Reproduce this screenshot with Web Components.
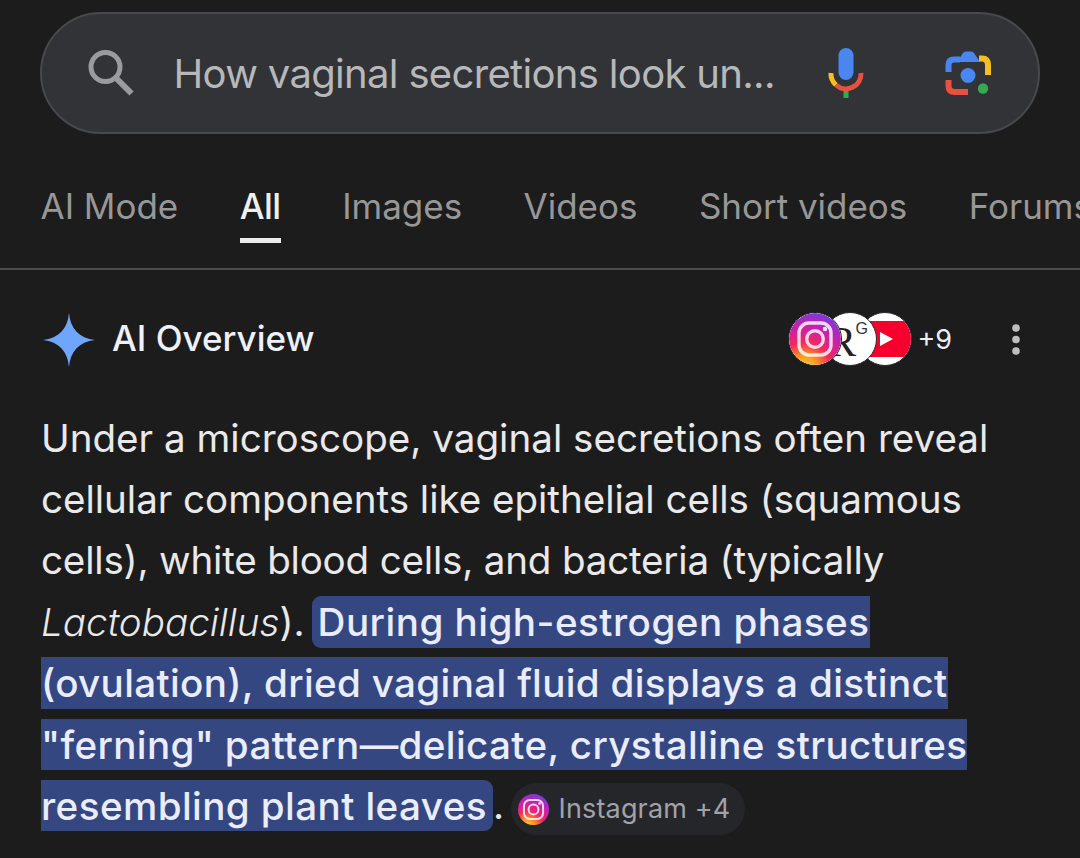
<!doctype html><html><head><style>
html,body{margin:0;background:#1c1c1d;overflow:hidden}
body{font-family:Inter,"Noto Sans",sans-serif;width:1080px;height:858px}
</style></head><body>
<search-app></search-app>
<template id="ig"><svg viewBox="0 0 52 52" width="100%" height="100%" style="display:block"><defs><radialGradient id="g1" cx="30%" cy="108%" r="115%"><stop offset="0" stop-color="#ffdd35"/><stop offset=".22" stop-color="#ff9a1f"/><stop offset=".45" stop-color="#f5265f"/><stop offset=".72" stop-color="#c81fb0"/><stop offset="1" stop-color="#6f3ee0"/></radialGradient></defs><circle cx="26" cy="26" r="26" fill="url(#g1)"/><rect x="10" y="10" width="32" height="32" rx="10" fill="none" stroke="#fff" stroke-opacity=".82" stroke-width="3.4"/><circle cx="26" cy="26" r="8.300" fill="none" stroke="#fff" stroke-opacity=".82" stroke-width="3.4"/><circle cx="36" cy="16" r="2.200" fill="#fff" fill-opacity=".9"/></svg></template>
<script>
const igMarkup=()=>document.getElementById('ig').innerHTML;
class SearchBar extends HTMLElement{connectedCallback(){this.attachShadow({mode:'open'}).innerHTML=`<style>
:host{display:flex;align-items:center;box-sizing:border-box;height:122px;margin:12px 40px 0 40px;border:2.5px solid #48494c;border-radius:61px;background:#323337;padding:0 43px 0 43px}
.q{flex:1;margin:0 0 0 36.500px;font-size:40px;letter-spacing:-.67px;color:#b7b8ba;white-space:nowrap}
svg{display:block;flex:none}
.mic{margin:6px 79px 0 0}
.lens{margin-top:3px}
</style>
<svg width="52" height="52" viewBox="0 0 52 52"><circle cx="20.500" cy="20" r="14.500" fill="none" stroke="#9a9b9d" stroke-width="5"/><path d="M31 31 L46.500 46.500" stroke="#9a9b9d" stroke-width="6" fill="none"/></svg>
<span class="q"><slot></slot></span>
<svg class="mic" width="40" height="56" viewBox="0 0 40 56"><rect x="12.500" y="0" width="15" height="32" rx="7.500" fill="#4a86f0"/><path d="M5 25 A 15 15 0 0 0 10 37" fill="none" stroke="#f6bf26" stroke-width="5"/><path d="M10 37 A 15 15 0 0 0 35 25" fill="none" stroke="#e8503f" stroke-width="5"/><rect x="17.500" y="43" width="5" height="7" fill="#34a853"/></svg>
<svg class="lens" width="50" height="50" viewBox="945 50 50 50"><path d="M948.500 72 V65 Q948.500 59.500 954 59.500 H960" fill="none" stroke="#4a86f0" stroke-width="6"/><path d="M957 62 L963 53 Q964 51.500 966 51.500 H971 Q973 51.500 974 53 L980 62 Z" fill="#4a86f0"/><path d="M979 58.500 H982 Q988 58.500 988 65 V75" fill="none" stroke="#f6bf26" stroke-width="6"/><path d="M948.500 80 V86 Q948.500 92 955 92 H968" fill="none" stroke="#e8503f" stroke-width="6"/><circle cx="968" cy="75.500" r="7.500" fill="#4a86f0"/><circle cx="983" cy="88.500" r="5.200" fill="#34a853"/></svg>`}}
customElements.define('search-bar',SearchBar);

class TabItem extends HTMLElement{connectedCallback(){const a=this.hasAttribute('active');this.attachShadow({mode:'open'}).innerHTML=`<style>
:host{display:flex;flex:none;flex-direction:column;align-items:stretch;font-size:35px;color:${a?'#f0f0f0':'#979797'};font-weight:${a?500:400};letter-spacing:${a?'-.5px':'-.02px'}}
.l{line-height:44px}
.u{height:5px;margin-top:10px;background:${a?'#ececec':'transparent'}}
</style><span class="l"><slot></slot></span><span class="u"></span>`}}
customElements.define('tab-item',TabItem);

class TabBar extends HTMLElement{connectedCallback(){this.attachShadow({mode:'open'}).innerHTML=`<style>
:host{display:flex;gap:61.500px;box-sizing:border-box;height:136px;padding:50px 0 0 40.500px;border-bottom:2px solid #4b4c4f;overflow:hidden;white-space:nowrap}
</style><slot></slot>`}}
customElements.define('tab-bar',TabBar);

class SourceIcons extends HTMLElement{connectedCallback(){this.attachShadow({mode:'open'}).innerHTML=`<style>
:host{display:flex;align-items:center}
.c{box-sizing:content-box;width:52px;height:52px;border-radius:50%;border:1px solid #2b2630;overflow:hidden;position:relative;flex:none;background:#fff;margin-left:-19px}
.c.a{margin-left:0;z-index:3;border-color:#1c1c1d}
.c.r{z-index:2;font-family:"Liberation Serif",serif;color:#222}
.r i{font-style:normal;position:absolute;left:3px;top:6px;font-size:43px;line-height:45px}
.r b{font-family:"Liberation Sans",sans-serif;font-weight:400;position:absolute;left:31px;top:8px;font-size:16px;line-height:16px;color:#333}
.c.y{z-index:1}
.y svg{display:block}
.n{margin-left:5px;font-size:27px;color:#eceef2}
</style><span class="c a">${igMarkup()}</span><span class="c r"><i>R</i><b>G</b></span><span class="c y"><svg viewBox="0 0 52 52" width="52" height="52"><rect x="0" y="8" width="56" height="36" rx="7" fill="#f6002e"/><path d="M21 19 L34 26 L21 33 Z" fill="#fff"/></svg></span><span class="n"><slot></slot></span>`}}
customElements.define('source-icons',SourceIcons);

class CiteChip extends HTMLElement{connectedCallback(){this.attachShadow({mode:'open'}).innerHTML=`<style>
:host{display:inline-flex;align-items:center;box-sizing:border-box;height:52px;padding:0 15px 0 7px;margin-left:6.500px;border-radius:26px;background:#25262a;color:#a1a2a9;font-size:27px;letter-spacing:.15px;line-height:52px;vertical-align:-5.500px;font-style:normal}
.i{width:31px;height:31px;margin-right:10px;flex:none}
</style><span class="i">${igMarkup()}</span><slot></slot>`}}
customElements.define('cite-chip',CiteChip);

class AiOverview extends HTMLElement{connectedCallback(){this.attachShadow({mode:'open'}).innerHTML=`<style>
:host{display:block;padding:0 41px}
header{display:flex;align-items:center;height:56px;margin-top:41px}
.star{flex:none;display:block;margin:2px 17px 0 2px}
h2{flex:1;margin:0 0 2px;font-size:35px;font-weight:500;color:#eef0fa}
.more{display:block;flex:none;margin:0 18px 0 59px}
::slotted(source-icons){flex:none}
.p{margin-top:41px;font-size:38.600px;line-height:61.200px;color:#e9e9ea;white-space:nowrap}
</style><header><svg class="star" width="52" height="54" viewBox="0 0 52 54"><path d="M26 0 C27.500 16 36 25 52 27 C36 29 27.500 38 26 54 C24.500 38 16 29 0 27 C16 25 24.500 16 26 0 Z" fill="#6fa6fb"/></svg><h2><slot name="title"></slot></h2><slot name="sources"></slot><svg class="more" width="10" height="33" viewBox="0 0 10 33"><circle cx="5" cy="5" r="3.800" fill="#bdbdbd"/><circle cx="5" cy="16.500" r="3.800" fill="#bdbdbd"/><circle cx="5" cy="28" r="3.800" fill="#bdbdbd"/></svg></header><div class="p"><slot></slot></div>`}}
customElements.define('ai-overview',AiOverview);

class HlText extends HTMLElement{connectedCallback(){this.attachShadow({mode:'open'}).innerHTML=`<style>
:host{display:inline;color:#e9edff;font-weight:500;background:#354781;margin-left:-4px;padding:2.500px 6px 3px 6px;border-radius:9px;-webkit-box-decoration-break:slice;box-decoration-break:slice}
</style><slot></slot>`}}
customElements.define('hl-text',HlText);

class SearchApp extends HTMLElement{connectedCallback(){this.attachShadow({mode:'open'}).innerHTML=`<style>
:host{display:block;width:1080px;height:858px;overflow:hidden;color:#eee}
i{font-weight:300}
</style>
<search-bar>How vaginal secretions look un...</search-bar>
<tab-bar><tab-item>AI Mode</tab-item><tab-item active>All</tab-item><tab-item>Images</tab-item><tab-item>Videos</tab-item><tab-item>Short videos</tab-item><tab-item>Forums</tab-item></tab-bar>
<ai-overview><span slot="title">AI Overview</span><source-icons slot="sources">+9</source-icons>Under a microscope, vaginal secretions often reveal<br><span style="letter-spacing:-.04px">cellular components like epithelial cells (squamous</span><br><span style="letter-spacing:-.2px">cells), white blood cells, and bacteria (typically</span><br><i>Lactobacillus</i>). <hl-text><span style="letter-spacing:.49px">During high-estrogen phases</span><br><span style="letter-spacing:.34px">(ovulation), dried vaginal fluid displays a distinct</span><br><span style="letter-spacing:.37px">"ferning" pattern—delicate, crystalline structures</span><br><span style="letter-spacing:.42px">resembling plant leaves</span></hl-text>.<cite-chip>Instagram +4</cite-chip></ai-overview>`;
}}
customElements.define('search-app',SearchApp);
</script></body></html>
